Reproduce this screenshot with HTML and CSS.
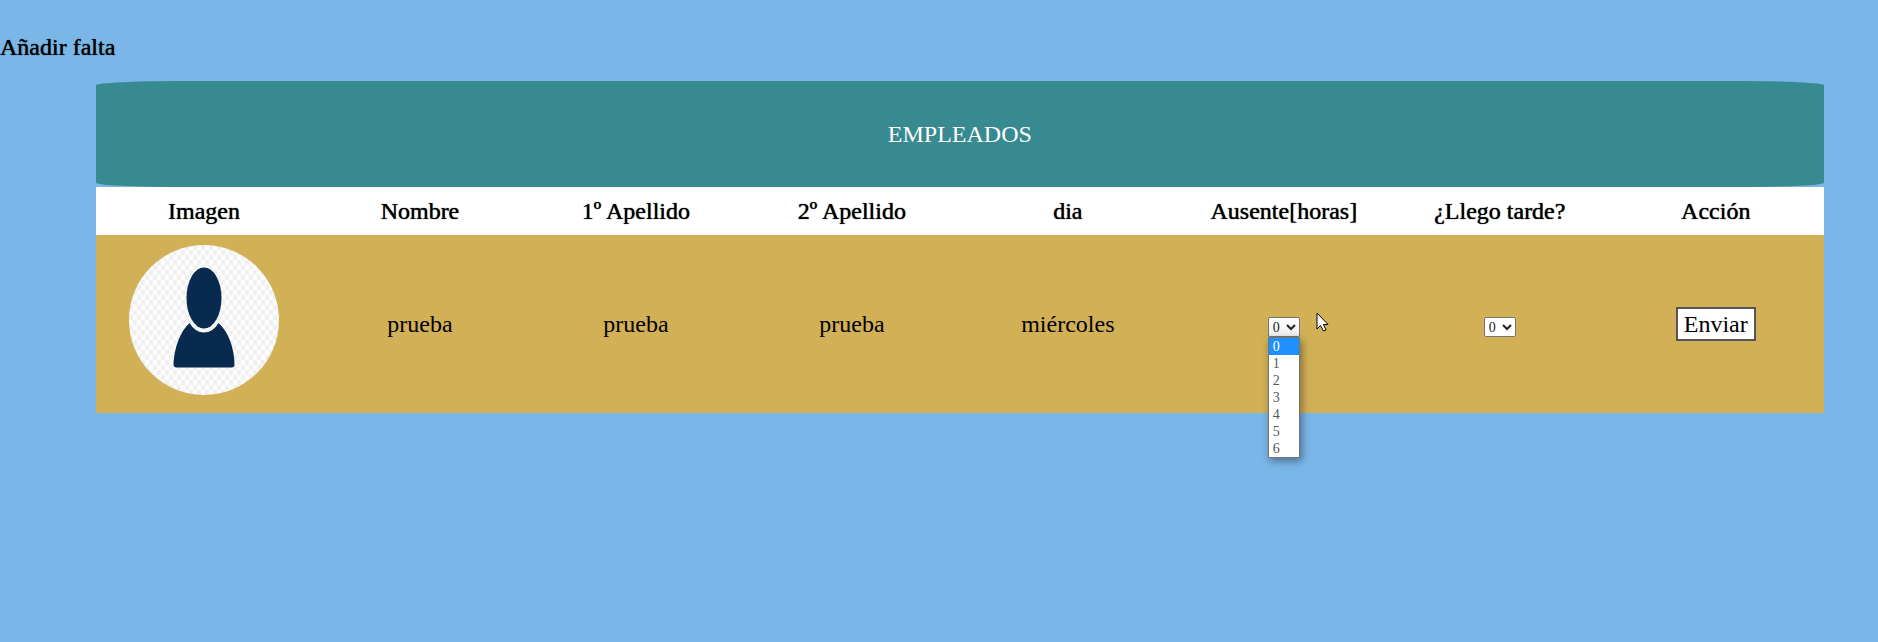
FILE: index.html
```html
<!DOCTYPE html>
<html lang="es">
<head>
<meta charset="utf-8">
<title>Añadir falta</title>
<link rel="stylesheet" href="styles.css">
</head>
<body>
<h1 class="title">Añadir falta</h1>
<form class="panel">
  <table class="employees">
    <caption class="banner">EMPLEADOS</caption>
    <thead>
      <tr>
        <th scope="col">Imagen</th>
        <th scope="col">Nombre</th>
        <th scope="col">1º Apellido</th>
        <th scope="col">2º Apellido</th>
        <th scope="col">dia</th>
        <th scope="col" id="absent">Ausente[horas]</th>
        <th scope="col" id="late">¿Llego tarde?</th>
        <th scope="col">Acción</th>
      </tr>
    </thead>
    <tbody>
      <tr>
        <td class="photo-cell">
          <svg class="avatar" viewBox="0 0 150 150" aria-hidden="true">
            <defs>
              <pattern id="check" width="8" height="10" patternUnits="userSpaceOnUse">
                <rect width="8" height="10" fill="#fdfdfd"/>
                <rect width="4" height="5" fill="#f0f0f0"/>
                <rect x="4" y="5" width="4" height="5" fill="#f0f0f0"/>
              </pattern>
            </defs>
            <circle cx="75" cy="75" r="75" fill="url(#check)"/>
            <path fill="#072a4e" d="M60.500 78Q66 87.500 75 87.500Q84 87.500 89.500 78C99 86 105.500 103 105.500 119.500Q105.500 122.500 102.500 122.500H47.500Q44.500 122.500 44.500 119.500C45 103 51.500 86 60.500 78Z"/>
            <ellipse cx="75" cy="53" rx="17.500" ry="30.500" fill="#072a4e"/>
          </svg>
        </td>
        <td>prueba</td>
        <td>prueba</td>
        <td>prueba</td>
        <td>miércoles</td>
        <td>
          <div class="picker">
            <select class="hours open" aria-labelledby="absent">
              <option>0</option><option>1</option><option>2</option><option>3</option><option>4</option><option>5</option><option>6</option>
            </select>
            <ul class="menu">
              <li class="active">0</li><li>1</li><li>2</li><li>3</li><li>4</li><li>5</li><li>6</li>
            </ul>
            <svg class="pointer" viewBox="0 0 13 20" aria-hidden="true">
              <path d="M1 1V17L4.500 13.500L7.500 19L10 18L7.500 12.500H12Z" fill="#fff" stroke="#000"/>
            </svg>
          </div>
        </td>
        <td>
          <div class="picker">
            <select class="hours" aria-labelledby="late">
              <option>0</option><option>1</option>
            </select>
          </div>
        </td>
        <td><button class="send" type="button">Enviar</button></td>
      </tr>
    </tbody>
  </table>
</form>
</body>
</html>
```
FILE: styles.css
```css
* {
  box-sizing: border-box;
}

body {
  min-height: 100vh;
  margin: 0;
  background: #7bb6e9;
  color: #000;
  font-family: "Liberation Serif", serif;
  font-size: 24px;
  line-height: 32px;
}

.title {
  margin: 0;
  padding: 31px 0 18px;
  font-size: 24px;
  font-weight: 400;
  text-shadow: 0 0 1px #000;
}

.panel {
  position: relative;
  z-index: 1;
  width: 92%;
  margin-left: 96px;
}

.employees {
  width: 100%;
  table-layout: fixed;
  border-spacing: 0;
  text-align: center;
}

.banner {
  padding: 37px 0;
  border-radius: 5% / 4%;
  background: #388a91;
  color: #fff;
}

.employees th {
  padding: 8px 0;
  background: #fff;
  font-weight: 400;
  text-shadow: 0 0 1px #000;
}

.employees td {
  padding: 0;
  background: #d1b056;
  vertical-align: middle;
}

.employees .photo-cell {
  padding: 10px 0 18px;
}

.avatar {
  display: block;
  width: 150px;
  height: 150px;
  margin: 0 auto;
}

.picker {
  position: relative;
  display: flex;
  width: 32px;
  margin: 0 auto;
  padding-top: 6px;
}

.hours {
  width: 32px;
  height: 20px;
  padding: 0;
  border: 1px solid #767676;
  border-radius: 2px;
  background: #fff;
  color: #222;
  font-family: inherit;
  font-size: 14px;
}

.open {
  background: linear-gradient(#fff, #eee);
}

.menu {
  position: absolute;
  top: 100%;
  left: 0;
  z-index: 2;
  width: 32px;
  margin: 0;
  padding: 0;
  border: 1px solid #767676;
  background: #fff;
  box-shadow: 2px 3px 8px rgba(0, 0, 0, 0.4);
  color: #555;
  font-size: 14px;
  line-height: 17px;
  list-style: none;
  text-align: left;
}

.menu li {
  padding-left: 4px;
}

.menu .active {
  background: #1e90ff;
  color: #fff;
}

.pointer {
  position: absolute;
  top: 1px;
  left: 48px;
  width: 13px;
  height: 20px;
}

.send {
  display: block;
  height: 34px;
  margin: 0 auto;
  padding: 0 6px;
  border: 2px solid #555;
  background: #fff;
  color: #000;
  font-family: inherit;
  font-size: 24px;
  line-height: 28px;
}
```
